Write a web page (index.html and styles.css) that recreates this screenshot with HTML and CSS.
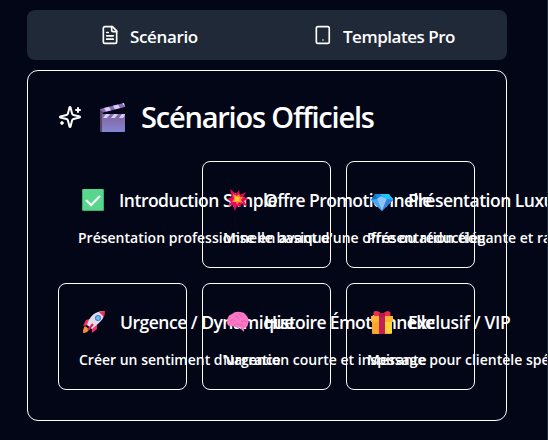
FILE: index.html
```html
<!DOCTYPE html>
<html lang="fr">
<head>
<meta charset="utf-8">
<title>Scénarios Officiels</title>
<link rel="stylesheet" href="styles.css">
</head>
<body>
<nav class="tabs">
  <div class="tab tab-scenario">
    <svg class="tab-icon" viewBox="0 0 24 24"><path d="M15 2H6a2 2 0 0 0-2 2v16a2 2 0 0 0 2 2h12a2 2 0 0 0 2-2V7Z"/><path d="M14 2v4a2 2 0 0 0 2 2h4M10 9H8M16 13H8M16 17H8"/></svg>
    <span>Scénario</span>
  </div>
  <div class="tab tab-templates">
    <svg class="tab-icon" viewBox="0 0 24 24"><rect x="4" y="2" width="15.500" height="20" rx="2"/><path d="M12 18h.01"/></svg>
    <span>Templates Pro</span>
  </div>
</nav>
<main class="panel">
  <h1 class="heading">
    <svg class="sparkles" viewBox="0 0 24 24"><path d="M9.94 15.5A2 2 0 0 0 8.5 14.06l-6.14-1.58a.5.5 0 0 1 0-.96L8.5 9.94A2 2 0 0 0 9.94 8.5l1.58-6.14a.5.5 0 0 1 .96 0L14.06 8.5a2 2 0 0 0 1.44 1.44l6.14 1.58a.5.5 0 0 1 0 .96L15.5 14.06a2 2 0 0 0-1.44 1.44l-1.58 6.14a.5.5 0 0 1-.96 0ZM20 3v4M22 5h-4M4 17v2M5 18H3"/></svg>
    <svg class="clapper" viewBox="0 0 28 30">
      <defs><linearGradient id="board" x2="0" y2="1"><stop stop-color="#80659a"/><stop offset="1" stop-color="#8585d4"/></linearGradient></defs>
      <path fill="#8b6bb4" d="M1 6 25 0l1 4L2 10Z"/>
      <path fill="#d5cdfa" d="m5 5 5-1.200 2 3.600-5 1.200ZM14 2.700l5-1.200 2 3.600-5 1.200ZM23 .5l2-.5.700 3.200Z"/>
      <path fill="#594667" d="M1 6.500 4 9v20H2q-1 0-1-1Z"/>
      <path fill="url(#board)" d="M3 11h23v17q0 1-1 1H3Z"/>
      <path fill="#8967ad" d="M3 11h23v4H3Z"/>
      <path fill="#d5cdfa" d="M7 11h4l-3 4H4ZM15 11h4l-3 4h-4ZM23 11h3v1l-2 3h-4Z"/>
    </svg>
    <span>Scénarios Officiels</span>
  </h1>
  <div class="cards">
    <article class="card selected">
      <h2><svg class="emoji" viewBox="0 0 22 22"><rect width="22" height="22" rx="1" fill="#3eae71"/><rect x="1" width="20" height="21" rx="1" fill="#58d68d"/><path d="m4 11 5 5 9-9" fill="none" stroke="#f5f2fa" stroke-width="2.300"/></svg><span>Introduction Simple</span></h2>
      <p>Présentation professionnelle basique</p>
    </article>
    <article class="card">
      <h2 class="snug"><svg class="emoji" viewBox="0 0 22 22"><path fill="#e6095e" d="m3 0 6 5 3-4 1 5 6-3-3 5 6 2-5 2 3 5-6-2-1 3-3-1-2 5-2-6-5 1 3-4-4-3 5-2Z"/><path fill="#ff8a2b" d="m6 5 4 2 2-2 1 3 3 0-2 3 2 3-4-1-2 3-1-3-4 0 2-3Z"/><path fill="#ffc52e" d="m8 7 3 1 2 0-1 3 1 2-3-1-2 1 0-3Z"/></svg><span>Offre Promotionnelle</span></h2>
      <p>Mise en avant d'une offre ou réduction</p>
    </article>
    <article class="card">
      <h2><svg class="emoji" viewBox="0 0 22 22"><path fill="#168ddc" d="M4 5h14l4 6-11 11L0 11Z"/><path fill="#19c8f5" d="M9 5h9l4 6-7-1Z"/><path fill="#0b70c9" d="m4 5 2 5-6 1Z"/><path fill="#8bc4fa" d="m6 10 4-3 6 3-5 12Z"/><path fill="#337fe4" d="m16 10 6 1-11 11Z"/><path fill="#49a7ee" d="m0 11 6-1 5 12Z"/></svg><span>Présentation Luxueuse</span></h2>
      <p>Présentation élégante et raffinée</p>
    </article>
    <article class="card">
      <h2><svg class="emoji" viewBox="0 0 22 22"><path fill="#ff8b32" d="m2 15 4 3q-1 4-6 4 0-5 2-7Z"/><path fill="#f3316e" d="m7 8-4 1-3 6 5-1 4 4v4l5-4v-4Z"/><path fill="#e3dbe8" d="M21 0q1 7-5 12l-7 6-5-4Q8 0 21 0Z"/><path fill="#e92f50" d="M16 1q3-1 6-1 0 3-1 6Z"/><circle cx="15" cy="7" r="3" fill="#3c7acf"/><circle cx="15" cy="7" r="2" fill="#72b9ff"/><path stroke="#d92262" stroke-width="2" d="m10 13-5 6"/></svg><span>Urgence / Dynamique</span></h2>
      <p>Créer un sentiment d'urgence</p>
    </article>
    <article class="card">
      <h2 class="snug"><svg class="emoji" viewBox="0 0 22 22"><path fill="#fb76c4" d="M0 12Q0 4 5 3q3-3 8-2 4 0 6 3 4 4 2 9 0 3-4 4v4l-3-3-1-2q-4 1-7-1-5 1-6-3Z"/><path fill="none" stroke="#df5aa8" stroke-width=".8" d="M3 10q3-3 5 0M8 5q3 0 4 3m0-5 3 3m-1 5q3-3 6 0M7 15q2-4 5-1 3-1 5 2"/></svg><span>Histoire Émotionnelle</span></h2>
      <p>Narration courte et inspirante</p>
    </article>
    <article class="card">
      <h2 class="loose"><svg class="emoji" viewBox="0 0 22 22"><path fill="#fba52d" d="M1 9h20v13q0 1-1 1H2q-1 0-1-1Z"/><path fill="#ffd43b" d="M13 9h8v13h-8Z"/><path fill="#ffb536" d="M0 5h22v6H0Z"/><path fill="#c52055" d="M8 5h6v18H8Z"/><path fill="#e92f49" d="M11 5H3q-2-5 2-5 4 0 6 4 3-4 6-4 4 1 2 5Z"/><path fill="#b8184b" d="M8 2h6v4H8Z"/></svg><span>Exclusif / VIP</span></h2>
      <p>Message pour clientèle spéciale</p>
    </article>
  </div>
</main>
</body>
</html>
```
FILE: styles.css
```css
* { box-sizing: border-box; }
body {
  margin: 0;
  height: 440px;
  padding: 10px 40px 0 27px;
  overflow: hidden;
  background: #020617;
  border-right: 1px solid #1f2937;
  color: #fff;
  font-family: "Open Sans", "Noto Sans", sans-serif;
  font-weight: 600;
}
.tabs {
  display: grid;
  grid-template-columns: 1fr 1fr;
  width: 480px;
  height: 50px;
  border-radius: 8px;
  background: #1f2937;
}
.tab { display: flex; align-items: center; font-size: 17px; white-space: nowrap; }
.tab-scenario { padding-left: 73px; letter-spacing: -0.35px; }
.tab-templates { padding-left: 46px; letter-spacing: -0.48px; }
.tab span { margin-top: 2px; }
.tab-icon { width: 20px; height: 20px; margin: 0 10px 1px 0; }
.tab-icon, .sparkles { fill: none; stroke: #fff; stroke-width: 2; stroke-linecap: round; stroke-linejoin: round; }
.panel {
  width: 480px;
  height: 351px;
  margin-top: 10px;
  padding: 30px;
  border: 1px solid #fff;
  border-radius: 11px;
}
.heading {
  display: flex;
  align-items: center;
  height: 34px;
  margin: 0 0 26px;
  font-size: 29px;
  font-weight: 600;
  letter-spacing: -1.200px;
  white-space: nowrap;
}
.heading span { margin-bottom: 3px; }
.sparkles { width: 24px; height: 24px; margin-bottom: 3px; flex: none; }
.clapper { width: 28px; height: 30px; margin: 0 14px 1px 17px; flex: none; }
.cards {
  display: grid;
  grid-template-columns: repeat(3, 129px);
  grid-auto-rows: 107px;
  gap: 15px;
}
.card {
  padding: 25px 20px 0;
  border: 1px solid #fff;
  border-radius: 8px;
  white-space: nowrap;
}
.selected { border-color: transparent; }
.card h2 {
  display: flex;
  align-items: center;
  height: 26px;
  margin: 0;
  font-size: 17.500px;
  font-weight: 600;
  letter-spacing: -0.5px;
}
.card h2.snug { letter-spacing: -0.6px; }
.card h2.loose { letter-spacing: -0.3px; }
.emoji { width: 22px; height: 22px; margin: 0 15px 0 4px; flex: none; overflow: visible; }
.card p { margin: 15px 0 0; font-size: 14px; line-height: 20px; letter-spacing: 0; }
.selected h2, .selected p { margin-left: -1px; }
```
